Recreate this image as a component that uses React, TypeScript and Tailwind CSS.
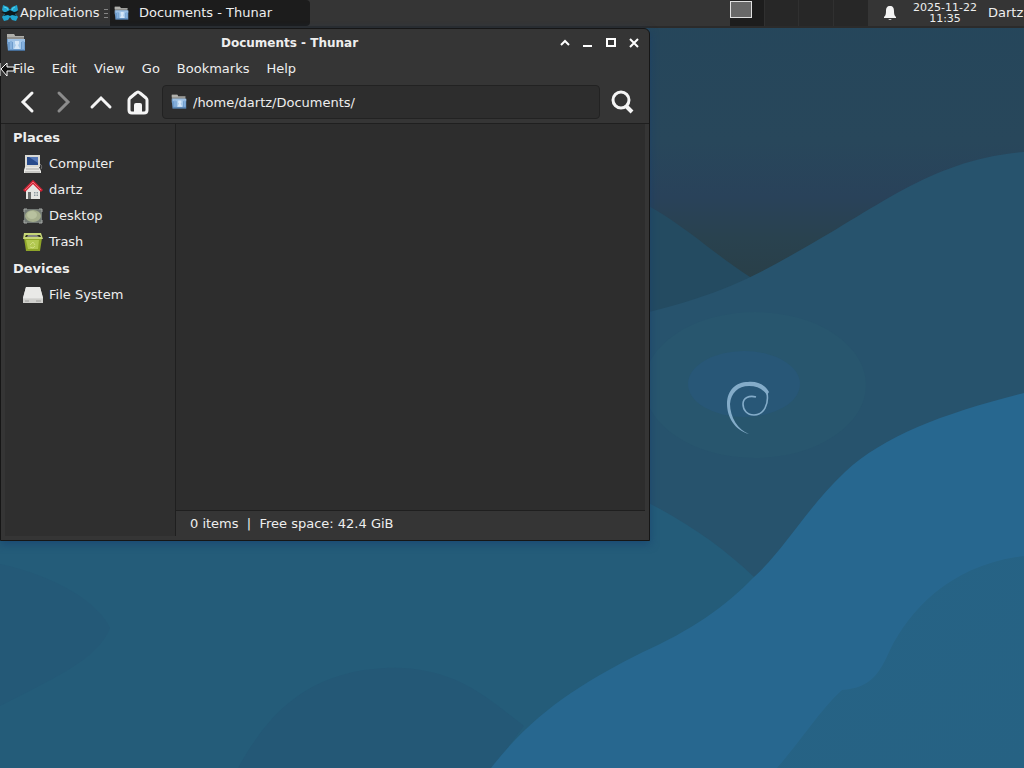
import React, { useState } from "react";

const FolderIcon = ({ size = 20 }: { size?: number }) => (
  <svg width={size} height={size} viewBox="0 0 20 20" className="shrink-0">
    <path d="M1 1h7l1 2h9v8H1z" fill="#8f8f8c" />
    <path d="M1 1h7l1 2h9v1H1z" fill="#b0b0ac" />
    <path d="M1 6h18v12H2L1 9z" fill="#6d9bcb" />
    <path d="M2 6h17v3H2z" fill="#9dc0e4" />
    <path d="M4 8h2v8H4zM16 8h2v8h-2z" fill="#86b0dc" />
    <path d="M7 8h8v8H7z" fill="#a5c8ea" />
    <path d="M9 8h4v3l-1 1 2 4H8l2-4-1-1z" fill="#d5e6f7" />
    <path d="M2 17h17v1H2z" fill="#466d97" />
  </svg>
);

const XfceIcon = () => (
  <svg width="18" height="18" viewBox="0 0 18 18" className="shrink-0">
    <path d="M2 1l5 2 2 3 2-3 5-2 1 5-3 3 3 4-2 4-4-1-2-3-2 3-4 1-2-4 3-4-3-3z" fill="#20a5d0" />
    <path d="M0 8l5 0 4-2 4 2 5-1-4 3 2 2-5-1-2 1-2-1-5 1 2-2z" fill="#0d1a1e" />
    <path d="M3 3l3 1 1 2M14 3l-2 1-1 2" stroke="#56d7f1" fill="none" />
  </svg>
);

const ComputerIcon = () => (
  <svg width="20" height="20" viewBox="0 0 20 20">
    <path d="M2 1h15v12H2z" fill="#d9d9d4" />
    <path d="M4 3h11v8H4z" fill="#284b8c" />
    <path d="M6 3h9v6z" fill="#5578b8" />
    <path d="M1 16l1-3h14l2 4v2H1z" fill="#e8e8e5" />
    <path d="M3 15h13M2 18h15" stroke="#a8a8a4" />
    <path d="M17 10c2 1 2 4 1 5" stroke="#777" fill="none" />
  </svg>
);

const UserHomeIcon = () => (
  <svg width="20" height="20" viewBox="0 0 20 20">
    <path d="M3 9l7-6 7 6v10H3z" fill="#e4e5e2" />
    <path d="M5 12h3v7H5z" fill="#6a6d6c" />
    <path d="M11 12h4v4h-4z" fill="#8c9a9f" />
    <path d="M13 12v4M11 14h4" stroke="#e4e5e2" />
    <path d="M1 11l9-9 9 9" stroke="#cf2233" strokeWidth="3" fill="none" />
    <path d="M2 10l8-8 8 8" stroke="#ef6b77" fill="none" />
  </svg>
);

const DesktopIcon = () => (
  <svg width="20" height="20" viewBox="0 0 20 20">
    <path d="M1 3h18v14H1z" fill="#737a75" />
    <ellipse cx="10" cy="10" rx="8" ry="6" fill="#a5ae8c" />
    <ellipse cx="9" cy="9" rx="5" ry="4" fill="#b8c19f" />
    <path d="M1 6V3h3M16 3h3v3M19 14v3h-3M4 17H1v-3" stroke="#a7aaa8" fill="none" />
  </svg>
);

const TrashIcon = () => (
  <svg width="20" height="20" viewBox="0 0 20 20">
    <path d="M1 6h18l-2 13H3z" fill="#8fa529" />
    <path d="M3 8h13l-1 9H5z" fill="#b2c850" />
    <path d="M1 1h17l2 6H0z" fill="#c6d677" />
    <path d="M3 3h14l1 2H2z" fill="#32371d" />
    <path d="M5 3h9l2 2H4z" fill="#858782" />
    <path d="M7 13l3-3 2 3M12 14l-2 2-3-1" stroke="#cddb7c" fill="none" />
  </svg>
);

const DriveIcon = () => (
  <svg width="22" height="20" viewBox="0 0 22 20">
    <path d="M4 2h14l3 11v5H1v-5z" fill="#d8d8d6" />
    <path d="M4 2h14l3 11H1z" fill="#e9e9e7" />
    <path d="M1 14h20v4H1z" fill="#cfcfcc" />
    <path d="M14 16h5M3 16h4" stroke="#9c9c9a" />
  </svg>
);

const Wallpaper = () => (
  <svg
    className="absolute inset-0 h-full w-full"
    viewBox="0 0 1024 768"
    preserveAspectRatio="xMidYMid slice"
    aria-hidden="true"
  >
    <defs>
      <linearGradient id="sky" x1="0" y1="0" x2="0" y2="1">
        <stop offset="0" stopColor="#25465b" />
        <stop offset="0.5" stopColor="#28475b" />
        <stop offset="0.7" stopColor="#29425a" />
        <stop offset="0.85" stopColor="#29424f" />
        <stop offset="1" stopColor="#293f48" />
      </linearGradient>
      <linearGradient id="dune" x1="0" y1="0" x2="1" y2="1">
        <stop offset="0" stopColor="#266386" />
        <stop offset="1" stopColor="#266283" />
      </linearGradient>
    </defs>
    <path d="M0 0h1024v280H0z" fill="url(#sky)" />
    <path d="M600 188C660 200 700 245 750 277V340H600z" fill="#244b61" />
    <path d="M600 322C690 306 740 285 790 256C880 207 930 160 1024 152V768H600z" fill="#27536d" />
    <ellipse cx="755" cy="385" rx="111" ry="73" fill="#28566e" />
    <ellipse cx="744" cy="384" rx="56" ry="33" fill="#285777" />
    <path d="M0 480H600C670 510 715 540 754 577L720 680L490 768H0z" fill="#245c79" />
    <path d="M0 564C60 577 100 605 110 628C98 660 50 680 0 706z" fill="#245977" />
    <path d="M238 768C270 710 310 672 385 668C455 665 490 700 524 726L492 768z" fill="#245876" />
    <path
      d="M1024 393C945 413 885 435 845 472C805 510 785 549 754 577C725 607 690 631 643 652C585 681 535 711 491 768H1024z"
      fill="#27678f"
    />
    <path d="M1024 556C950 565 910 610 890 650C880 672 872 688 842 690C820 710 800 742 777 768H1024z" fill="url(#dune)" />
    {/* debian swirl */}
    <path
      d="M749 434C734 430 727 416 727 404C727 390 736 382 748 382C759 381 766 386 769 392L767 395C763 389 757 386 749 386C738 386 731 393 730 404C730 417 738 430 749 434z"
      fill="#84acc9"
    />
    <path
      d="M767 393C769 404 764 415 754 415C747 415 743 410 743 404C743 398 749 395 756 397"
      fill="none"
      stroke="#84acc9"
      strokeWidth="1.6"
    />
  </svg>
);

const menus = ["File", "Edit", "View", "Go", "Bookmarks", "Help"];

const places = [
  { name: "Computer", icon: <ComputerIcon /> },
  { name: "dartz", icon: <UserHomeIcon /> },
  { name: "Desktop", icon: <DesktopIcon /> },
  { name: "Trash", icon: <TrashIcon /> },
];

const SidebarRow = ({ name, icon }: { name: string; icon: React.ReactNode }) => (
  <li>
    <a href="#" className="flex h-[26px] items-center gap-[5px] pl-[17px]">
      <span className="flex w-[22px] justify-center">{icon}</span>
      {name}
    </a>
  </li>
);

const Panel = () => (
  <header className="relative flex h-7 items-stretch border-b-2 border-[#2b2b2b] bg-[#353535]">
    <button className="flex w-[102px] items-center gap-px pl-px">
      <XfceIcon />
      Applications
    </button>
    <div className="flex w-2 flex-col justify-center gap-[3px] pr-[2px] pl-[2px]">
      <span className="h-px bg-[#858585]" />
      <span className="h-px bg-[#858585]" />
      <span className="h-px bg-[#858585]" />
    </div>
    <button className="flex w-[200px] items-center gap-[10px] rounded-r-sm bg-[#1c1c1c] pl-1">
      <FolderIcon size={15} />
      Documents - Thunar
    </button>
    <div className="ml-auto flex">
      <div className="grid w-[138px] grid-cols-4 divide-x divide-[#303030] bg-[#272727]">
        <button aria-label="Workspace 1" className="flex items-start bg-[#1d1d1d]">
          <span className="mt-px h-[17px] w-[22px] border border-[#e0e0e0] bg-[#686868]" />
        </button>
        <button aria-label="Workspace 2" />
        <button aria-label="Workspace 3" />
        <button aria-label="Workspace 4" />
      </div>
      <button aria-label="Notifications" className="flex w-11 items-center justify-center">
        <svg width="14" height="16" viewBox="0 0 14 16" fill="#f4f4f4">
          <path d="M7 1c3 0 4 2 4 5 0 4 1 5 2 6v1H1v-1c1-1 2-2 2-6 0-3 1-5 4-5zM5 14h4l-2 1z" />
        </svg>
      </button>
      <time className="flex w-[66px] flex-col justify-center text-center text-[11px] leading-[11px]">
        <span>2025-11-22</span>
        <span>11:35</span>
      </time>
      <button className="w-[46px] overflow-hidden pl-[10px] text-left">Dartz</button>
    </div>
  </header>
);

export default function App() {
  const [path, setPath] = useState("/home/dartz/Documents/");

  return (
    <div className="relative min-h-screen overflow-hidden bg-[#245c79] font-['DejaVu_Sans',sans-serif] text-[13px] leading-4 text-[#eeeeee]">
      <Wallpaper />
      <Panel />

      <main className="absolute top-7 left-0 flex h-[513px] w-[650px] flex-col rounded-tr-md border border-[#161616] bg-[#353535] shadow-[0_3px_8px_rgba(20,60,110,0.6)]">
        <div className="flex h-7 items-center pr-1 pl-[5px]">
          <FolderIcon />
          <h1 className="flex-1 text-center text-[12px] font-bold">Documents - Thunar</h1>
          <button aria-label="Shade" className="flex w-[23px] justify-center">
            <svg width="12" height="12" viewBox="0 0 12 12" fill="none" stroke="#fff" strokeWidth="2">
              <path d="M2 8l4-4 4 4" />
            </svg>
          </button>
          <button aria-label="Minimize" className="flex w-[23px] justify-center">
            <svg width="12" height="12" viewBox="0 0 12 12" fill="none" stroke="#fff" strokeWidth="2">
              <path d="M1 9h9" />
            </svg>
          </button>
          <button aria-label="Maximize" className="flex w-[23px] justify-center">
            <svg width="12" height="12" viewBox="0 0 12 12" fill="none" stroke="#fff" strokeWidth="2">
              <path d="M2 2h8v7H2z" />
            </svg>
          </button>
          <button aria-label="Close" className="flex w-[23px] justify-center">
            <svg width="12" height="12" viewBox="0 0 12 12" fill="none" stroke="#fff" strokeWidth="2">
              <path d="M2 2l8 8M10 2l-8 8" />
            </svg>
          </button>
        </div>

        <nav className="flex h-6 items-center gap-px pl-1">
          {menus.map((m) => (
            <button key={m} className="px-2">
              {m}
            </button>
          ))}
        </nav>

        <div className="flex h-[43px] items-center border-b border-[#1f1f1f] pl-[7px]">
          <button aria-label="Back" className="flex w-[37px] justify-center">
            <svg width="24" height="24" viewBox="0 0 24 24" fill="none" stroke="#f5f5f5" strokeWidth="3" strokeLinecap="round">
              <path d="M17 3l-9 9 9 9" />
            </svg>
          </button>
          <button aria-label="Forward" className="flex w-[37px] justify-center">
            <svg width="24" height="24" viewBox="0 0 24 24" fill="none" stroke="#8c8c8c" strokeWidth="3" strokeLinecap="round">
              <path d="M7 3l9 9-9 9" />
            </svg>
          </button>
          <button aria-label="Parent folder" className="flex w-[37px] justify-center">
            <svg width="24" height="24" viewBox="0 0 24 24" fill="none" stroke="#f5f5f5" strokeWidth="3" strokeLinecap="round">
              <path d="M3 17l9-9 9 9" />
            </svg>
          </button>
          <button aria-label="Home" className="flex w-[37px] justify-center">
            <svg width="24" height="26" viewBox="0 0 24 26" fill="#f5f5f5">
              <path
                d="M3 11q0-1 1-2l6-5q2-2 4 0l6 5q1 1 1 2v10q0 3-3 3H6q-3 0-3-3z"
                fill="none"
                stroke="#f5f5f5"
                strokeWidth="3"
                strokeLinejoin="round"
              />
              <path d="M8 24v-8q0-2 2-2h4q2 0 2 2v8z" />
            </svg>
          </button>
          <label className="ml-[6px] flex h-[34px] flex-1 items-center gap-[6px] rounded-sm border border-[#222222] bg-[#2d2d2d] pl-2">
            <FolderIcon size={16} />
            <input
              aria-label="Location"
              className="w-full bg-transparent pt-px outline-none"
              value={path}
              onChange={(e) => setPath(e.target.value)}
            />
          </label>
          <button aria-label="Search" className="flex w-[49px] pl-[10px]">
            <svg width="24" height="26" viewBox="0 0 24 26" fill="none" stroke="#f5f5f5">
              <circle cx="11" cy="11" r="8" strokeWidth="3" />
              <path d="M16 17l6 6" strokeWidth="4" />
            </svg>
          </button>
        </div>

        <div className="mx-1 mb-1 flex min-h-0 flex-1">
          <aside className="w-[171px] border-r border-[#1f1f1f] bg-[#2f2f2f] pt-px">
            <h2 className="flex h-[26px] items-center pl-2 font-bold">Places</h2>
            <ul>
              {places.map((p) => (
                <SidebarRow key={p.name} name={p.name} icon={p.icon} />
              ))}
            </ul>
            <h2 className="mt-px flex h-[26px] items-center pl-2 font-bold">Devices</h2>
            <ul>
              <SidebarRow name="File System" icon={<DriveIcon />} />
            </ul>
          </aside>
          <section className="flex flex-1 flex-col">
            <div className="flex-1 bg-[#2d2d2d]" />
            <footer className="flex h-[26px] items-center border-t border-[#1f1f1f] pl-[14px] whitespace-pre">
              0 items  |  Free space: 42.4 GiB
            </footer>
          </section>
        </div>
      </main>

      {/* resize cursor */}
      <svg className="absolute top-[61px] left-0" width="16" height="17" viewBox="0 0 16 17">
        <path d="M0 2v13M1 8l6-6v4h7v4H7v5z" fill="#111" stroke="#fff" />
      </svg>
    </div>
  );
}
